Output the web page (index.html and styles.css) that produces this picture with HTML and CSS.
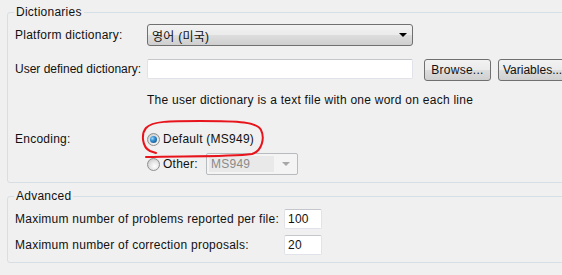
FILE: index.html
```html
<!DOCTYPE html>
<html>
<head>
<meta charset="utf-8">
<link rel="stylesheet" href="styles.css">
</head>
<body>
<div class="page">
  <fieldset class="group group-dict">
    <legend>Dictionaries</legend>
    <div class="row row-platform">
      <span class="label">Platform dictionary:</span>
      <div class="combo">
        <span class="combo-text">영어 (미국)</span>
        <span class="combo-arrow"></span>
      </div>
    </div>
    <div class="row row-user">
      <span class="label label-tight">User defined dictionary:</span>
      <div class="textbox wide"></div>
      <button class="btn btn-browse">Browse...</button>
      <button class="btn btn-vars">Variables...</button>
    </div>
    <div class="note">The user dictionary is a text file with one word on each line</div>
    <div class="row row-enc">
      <span class="label">Encoding:</span>
      <span class="radio checked"></span>
      <span class="radio-text">Default (MS949)</span>
    </div>
    <div class="row row-other">
      <span class="label"></span>
      <span class="radio"></span>
      <span class="radio-text other-text">Other:</span>
      <div class="combo disabled">
        <span class="combo-field">MS949</span>
        <span class="combo-arrow grey"></span>
      </div>
    </div>
  </fieldset>
  <fieldset class="group group-adv">
    <legend>Advanced</legend>
    <div class="row row-adv1">
      <span class="label label-adv">Maximum number of problems reported per file:</span>
      <div class="textbox small">100</div>
    </div>
    <div class="row row-adv2">
      <span class="label label-adv">Maximum number of correction proposals:</span>
      <div class="textbox small">20</div>
    </div>
  </fieldset>
  <svg class="scribble" width="562" height="275" viewBox="0 0 562 275">
    <path d="M146 157 C 180 156, 230 157, 252 154 C 262 151, 265 138, 261 130 C 257 122, 240 121, 200 121 C 170 121, 152 121, 146 128 C 141 134, 142 147, 150 151 L 156 153" fill="none" stroke="#e8141c" stroke-width="2" stroke-linecap="round"/>
  </svg>
</div>
</body>
</html>
```

FILE: styles.css
```css
html, body {
  margin: 0;
  padding: 0;
}
body {
  background: #f0f0f0;
  font-family: "Liberation Sans", "Noto Sans CJK KR", sans-serif;
  font-size: 12px;
  letter-spacing: 0.25px;
  color: #111;
  width: 562px;
  height: 275px;
  overflow: hidden;
}
.page {
  position: relative;
  padding: 5px 0 0 7px;
  width: 600px;
}
.group {
  border: 1px solid #d5dfe5;
  border-radius: 3px;
  margin: 0;
  padding: 0 0 7px 7px;
  min-width: 0;
}
.group legend {
  margin-left: -1px;
  padding: 0 2px;
  line-height: 15px;
}
.group-adv {
  margin-top: 6px;
}
.row {
  display: flex;
  align-items: center;
}
.label {
  width: 132px;
  flex: none;
  white-space: nowrap;
}
.label-tight {
  letter-spacing: 0;
}
.label-adv {
  width: 269px;
}
.row-platform {
  margin-top: 4px;
  height: 22px;
}
.combo {
  box-sizing: border-box;
  width: 266px;
  height: 22px;
  border: 1px solid #707070;
  border-radius: 3px;
  background: linear-gradient(#f2f2f2 0%, #ebebeb 48%, #dddddd 52%, #cfcfcf 100%);
  display: flex;
  align-items: center;
  padding-left: 4px;
}
.combo-text {
  flex: 1;
}
.combo-arrow {
  width: 0;
  height: 0;
  border-left: 4px solid transparent;
  border-right: 4px solid transparent;
  border-top: 4px solid #000;
  margin-right: 5px;
}
.combo-arrow.grey {
  border-top-color: #a7a7a7;
  margin-right: 7px;
}
.row-user {
  margin-top: 13px;
  height: 22px;
  align-items: flex-start;
}
.row-user .label {
  line-height: 20px;
}
.textbox {
  box-sizing: border-box;
  background: #fff;
  border: 1px solid #e2e3ea;
  border-top-color: #c5c7cc;
  border-radius: 2px;
  height: 20px;
  line-height: 18px;
  padding-left: 3px;
}
.textbox.wide {
  width: 266px;
}
.textbox.small {
  width: 38px;
}
.btn {
  box-sizing: border-box;
  height: 22px;
  border: 1px solid #707070;
  border-radius: 3px;
  background: linear-gradient(#f2f2f2 0%, #ebebeb 48%, #dddddd 52%, #cfcfcf 100%);
  font: inherit;
  letter-spacing: inherit;
  color: inherit;
  padding: 0;
  flex: none;
}
.btn-browse {
  width: 67px;
  margin-left: 11px;
}
.btn-vars {
  width: 70px;
  margin-left: 7px;
  text-align: left;
  padding-left: 4px;
  letter-spacing: 0;
}
.note {
  margin-top: 12px;
  padding-left: 132px;
  line-height: 15px;
}
.row-enc {
  margin-top: 23px;
  height: 16px;
}
.radio {
  box-sizing: border-box;
  width: 13px;
  height: 13px;
  border-radius: 50%;
  border: 1px solid #8e8f8f;
  background: radial-gradient(circle at 60% 65%, #ffffff 0%, #e6e6e6 45%, #bdbdbd 100%);
  flex: none;
  position: relative;
}
.radio.checked::after {
  content: "";
  position: absolute;
  left: 2px;
  top: 2px;
  width: 7px;
  height: 7px;
  border-radius: 50%;
  background: radial-gradient(circle at 35% 35%, #9fd7f7 0%, #2c8bd1 40%, #0f3f6e 100%);
}
.radio-text {
  margin-left: 3px;
}
.row-other {
  margin-top: 6px;
  height: 22px;
}
.other-text {
  width: 43px;
}
.combo.disabled {
  width: 92px;
  border-color: #b8bcbf;
  border-radius: 2px;
  background: #f4f4f4;
  padding: 2px 0 2px 2px;
}
.combo-field {
  flex: 1;
  height: 100%;
  background: #e9e9e9;
  color: #8a8a8a;
  line-height: 16px;
  padding-left: 2px;
  margin-right: 8px;
}
.row-adv1 {
  margin-top: 5px;
  height: 20px;
}
.row-adv2 {
  margin-top: 6px;
  height: 20px;
}
.scribble {
  position: absolute;
  left: 0;
  top: 0;
  pointer-events: none;
}
```
